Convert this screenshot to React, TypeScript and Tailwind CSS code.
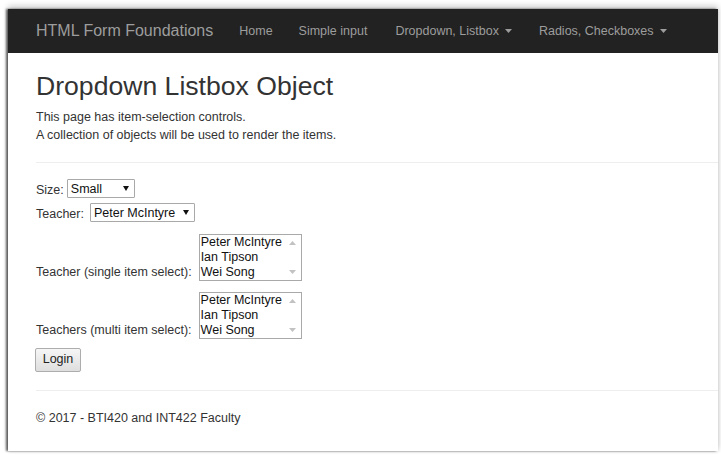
import React from "react";

function Caret({ className }: { className?: string }) {
  return (
    <svg width="7" height="4" viewBox="0 0 7 4" className={className}>
      <path d="M0 0 L7 0 L3.5 4 Z" fill="currentColor" />
    </svg>
  );
}

function SelectBox({ label, width, h }: { label: string; width: string; h: string }) {
  return (
    <div className={`flex items-start justify-between border border-[#a9a9a9] rounded-[1px] bg-white text-[#111] ${width} ${h} pl-[3px] pr-[5px]`}>
      <span className="leading-[14px] pt-[2px] whitespace-nowrap">{label}</span>
      <svg width="6" height="5" viewBox="0 0 6 5" className="mt-[6px]">
        <path d="M0 0 L6 0 L3 5 Z" fill="#111" />
      </svg>
    </div>
  );
}

function ListBox() {
  return (
    <div className="flex w-[103px] h-[47px] border border-[#a9a9a9] bg-white text-[#111]">
      <div className="flex-1 pl-[1px]">
        <div className="leading-[15px] h-[15px] whitespace-nowrap">Peter McIntyre</div>
        <div className="leading-[15px] h-[15px] whitespace-nowrap">Ian Tipson</div>
        <div className="leading-[15px] h-[15px] whitespace-nowrap">Wei Song</div>
      </div>
      <div className="w-[16px] flex flex-col items-center justify-between py-[6px]">
        <svg width="7" height="4" viewBox="0 0 7 4">
          <path d="M0 4 L7 4 L3.5 0 Z" fill="#c2c2c2" />
        </svg>
        <svg width="7" height="4" viewBox="0 0 7 4">
          <path d="M0 0 L7 0 L3.5 4 Z" fill="#c2c2c2" />
        </svg>
      </div>
    </div>
  );
}

export default function App() {
  return (
    <div className="w-[721px] h-[455px] bg-white overflow-hidden pl-[8px] pt-[9px] font-['Liberation_Sans',Arial,sans-serif]">
      <div className="w-[710px] h-[442px] bg-white overflow-hidden shadow-[-2px_0_2px_rgba(0,0,0,0.6),0_-3px_6px_rgba(0,0,0,0.2),1px_1px_3px_rgba(0,0,0,0.08)]">
        {/* Navbar */}
        <div className="h-[44px] bg-[#222] flex items-center pl-[28px] text-[#9d9d9d]">
          <span className="text-[16px] mr-[13px] whitespace-nowrap">HTML Form Foundations</span>
          <span className="text-[12.5px] px-[13px] whitespace-nowrap">Home</span>
          <span className="text-[12.5px] pl-[13px] pr-[14px] whitespace-nowrap">Simple input</span>
          <span className="text-[12.5px] pl-[14px] pr-[14px] whitespace-nowrap flex items-center">
            Dropdown, Listbox
            <Caret className="ml-[6px]" />
          </span>
          <span className="text-[12.5px] px-[13px] whitespace-nowrap flex items-center">
            Radios, Checkboxes
            <Caret className="ml-[6px]" />
          </span>
        </div>

        {/* Content */}
        <div className="pl-[28px] text-[12.5px] text-[#333]">
          <h2 className="mt-[18px] text-[26.6px] leading-[30px] font-normal text-[#333]">Dropdown Listbox Object</h2>
          <p className="mt-[8px] leading-[17.8px]">
            This page has item-selection controls.
            <br />
            A collection of objects will be used to render the items.
          </p>
          <div className="mt-[17px] border-t border-[#eee]" />

          <div className="mt-[16px] flex items-end gap-[3px] h-[19px]">
            <span className="leading-[14px] pb-[1px]">Size:</span>
            <SelectBox label="Small" width="w-[68px]" h="h-[19px]" />
          </div>

          <div className="mt-[5px] flex items-end gap-[6px] h-[19px]">
            <span className="leading-[14px] pb-[1px]">Teacher:</span>
            <SelectBox label="Peter McIntyre" width="w-[105px]" h="h-[19px]" />
          </div>

          <div className="mt-[12px] flex items-end gap-[7px]">
            <span className="leading-[15px] pb-[1px] whitespace-nowrap">Teacher (single item select):</span>
            <ListBox />
          </div>

          <div className="mt-[11px] flex items-end gap-[7px]">
            <span className="leading-[15px] pb-[1px] whitespace-nowrap">Teachers (multi item select):</span>
            <ListBox />
          </div>

          <div className="mt-[9px] -ml-[1px]">
            <div className="w-[46px] h-[24px] border border-[#adadad] rounded-[2px] bg-[linear-gradient(#f6f6f6,#dedede)] flex items-center justify-center text-[#222] text-[12.5px]">
              Login
            </div>
          </div>

          <div className="mt-[18px] border-t border-[#eee]" />
          <p className="mt-[19px] leading-[17.8px]">© 2017 - BTI420 and INT422 Faculty</p>
        </div>
      </div>
    </div>
  );
}
